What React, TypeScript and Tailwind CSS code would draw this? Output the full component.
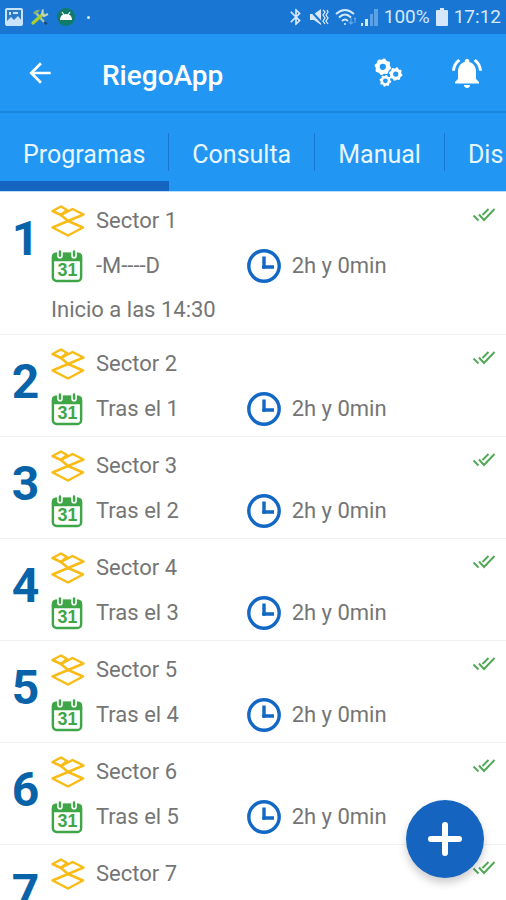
import { MdArrowBack, MdBluetooth, MdNotificationsActive } from "react-icons/md";

type Program = { id: number; name: string; when: string; duration: string; start?: string };

const programs: Program[] = [
  { id: 1, name: "Sector 1", when: "-M----D", duration: "2h y 0min", start: "Inicio a las 14:30" },
  { id: 2, name: "Sector 2", when: "Tras el 1", duration: "2h y 0min" },
  { id: 3, name: "Sector 3", when: "Tras el 2", duration: "2h y 0min" },
  { id: 4, name: "Sector 4", when: "Tras el 3", duration: "2h y 0min" },
  { id: 5, name: "Sector 5", when: "Tras el 4", duration: "2h y 0min" },
  { id: 6, name: "Sector 6", when: "Tras el 5", duration: "2h y 0min" },
  { id: 7, name: "Sector 7", when: "Tras el 6", duration: "2h y 0min" },
];

const tabs = ["Programas", "Consulta", "Manual", "Dis"];

function SectorIcon() {
  return (
    <svg viewBox="0 0 34 32" className="h-8 w-[34px] shrink-0" fill="none" stroke="#f9bb16" strokeWidth="2.5" strokeLinejoin="round" aria-hidden="true">
      <path d="M1.500 6 10 1.500 16 5l-6 5z" />
      <path d="M10 10 21.500 4 32.500 9.500 17 16z" />
      <path d="M17 16 1.500 22.500 17 30.500l15-8z" />
    </svg>
  );
}

function CalendarIcon() {
  return (
    <svg viewBox="0 0 34 36" className="h-[34px] w-8 shrink-0" aria-hidden="true">
      <rect x="2" y="5" width="30" height="29" rx="4" fill="#fff" stroke="#3fa648" strokeWidth="2.600" />
      <path d="M1 13V8q0-4 4-4h24q4 0 4 4v5z" fill="#3fa648" />
      <path d="M9.500 3v4M24.500 3v4" stroke="#fff" strokeWidth="6" strokeLinecap="round" />
      <path d="M9.500 2.500v4.500M24.500 2.500v4.500" stroke="#3fa648" strokeWidth="2.600" strokeLinecap="round" />
      <text x="17.500" y="29" textAnchor="middle" fontFamily="Liberation Sans, sans-serif" fontSize="19" fontWeight="700" fill="#3fa648">31</text>
    </svg>
  );
}

function ClockIcon() {
  return (
    <svg viewBox="0 0 34 34" className="size-[34px] shrink-0" fill="none" stroke="#1268c4" aria-hidden="true">
      <circle cx="17" cy="17" r="15.200" strokeWidth="3.400" />
      <path d="M17 7.500V18h10" strokeWidth="3.400" />
      <circle cx="17" cy="18" r="1.500" fill="#1268c4" />
    </svg>
  );
}

function DoubleCheck() {
  return (
    <svg viewBox="0 0 24 16" className="h-4 w-6 shrink-0" fill="none" stroke="#4fa853" strokeWidth="1.900" role="img" aria-label="Activo">
      <path d="M1.500 8.500 6.500 13.500M7 7.500 12 13 22.500 2M10.500 8 16.500 2" />
    </svg>
  );
}

function Gear({ x, y, r, hole }: { x: number; y: number; r: number; hole: number }) {
  const points = Array.from({ length: 32 }, (_, i) => {
    const radius = i % 4 < 2 ? r : r - 1;
    const angle = ((i + 0.5) * Math.PI) / 16;
    return `${x + radius * Math.cos(angle)},${y + radius * Math.sin(angle)}`;
  }).join(" ");
  return (
    <>
      <polygon points={points} fill="#fff" />
      <circle cx={x} cy={y} r={hole} fill="#2196f3" />
    </>
  );
}

function StatusBar() {
  return (
    <div className="flex h-[34px] shrink-0 items-center justify-between bg-[#1976d2] pr-[5px] pl-[5px] text-[#d5e8fb]">
      <div className="flex items-center gap-2">
        <svg viewBox="0 0 18 18" className="size-[18px]" aria-hidden="true">
          <rect x="1" y="1" width="16" height="16" rx="1" fill="#2b79c9" stroke="#c9e3fc" strokeWidth="2" />
          <path d="M1 14 6 9l3 3 4-4 4 5v4H1zM4 4h2v3H4zM8 4h5v2H8z" fill="#c9e3fc" />
        </svg>
        <svg viewBox="0 0 18 18" className="size-[18px]" fill="none" aria-hidden="true">
          <path d="M5 5 14 15" stroke="#a8c6a0" strokeWidth="2.500" />
          <path d="M2 5q3-4 7-3L5 7z" fill="#8cb07d" />
          <path d="M2 15 12 6" stroke="#a7cf31" strokeWidth="3.200" strokeLinecap="round" />
          <path d="M12 1.500 11 6l2 2 4-2" stroke="#c7d3c2" strokeWidth="2" />
          <path d="m13 14 3 2" stroke="#134b87" strokeWidth="2.500" />
        </svg>
        <svg viewBox="0 0 18 18" className="size-[18px]" aria-hidden="true">
          <circle cx="9" cy="9" r="9" fill="#0f7b68" />
          <path d="M3 12q0-6 6-6t6 6z" fill="#fff" />
          <path d="m5 4 2 3M13 4l-2 3" stroke="#fff" strokeWidth="1.200" />
        </svg>
        <span className="ml-1 size-[3px] rounded-full bg-[#d5e8fb]" />
      </div>
      <div className="flex items-center font-['Roboto',sans-serif] text-[19px] leading-6">
        <MdBluetooth className="h-5 w-5" aria-hidden="true" />
        <svg viewBox="0 0 20 18" className="ml-[3px] h-[18px] w-5" aria-hidden="true">
          <path d="M1 6h4l7-5v16l-7-5H1z" fill="currentColor" />
          <path d="M1 2 14 16" stroke="#1976d2" strokeWidth="2" />
          <path d="m14 2 2 2-2 3 2 3-2 3 2 3M18 2l1 2-2 3 2 3-2 3 2 3" fill="none" stroke="currentColor" strokeWidth="1.300" />
        </svg>
        <svg viewBox="0 0 22 18" className="ml-[6px] h-[18px] w-[22px]" fill="none" stroke="currentColor" strokeWidth="2" aria-hidden="true">
          <path d="M1 6q9-8 18 0M4 9.500q6-6 12 0M7 13q3-3 6 0" />
          <circle cx="10" cy="16" r="1" fill="currentColor" stroke="none" />
          <path d="M16 10v6m-2-2 2 2 2-2M20 15v-5m-1 1 1-1 1 1" stroke="#62a7e8" strokeWidth="1.200" />
        </svg>
        <svg viewBox="0 0 18 18" className="ml-[3px] size-[18px]" fill="currentColor" aria-hidden="true">
          <path d="M1 15h2v3H1zM5 11h3v7H5z" />
          <path d="M10 6h3v12h-3zM14 1h4v17h-4z" fill="#5ba1e6" />
        </svg>
        <span className="ml-[6px]">100%</span>
        <svg viewBox="0 0 12 18" className="ml-[6px] h-[18px] w-3" fill="currentColor" aria-hidden="true">
          <path d="M4 0h4v2h3q1 0 1 1v14q0 1-1 1H1q-1 0-1-1V3q0-1 1-1h3z" />
        </svg>
        <span className="ml-[6px]">17:12</span>
      </div>
    </div>
  );
}

function ProgramRow({ program }: { program: Program }) {
  return (
    <li className="flex border-b border-[#f0f0f0] pt-[6px]">
      <div className="w-[51px] shrink-0 pt-3 text-center text-[48px] leading-[58px] font-bold text-[#0863a8]">{program.id}</div>
      <div className="min-w-0 grow">
        <div className="flex h-[45px] items-center gap-[11px] pr-[10px]">
          <SectorIcon />
          <span className="grow">{program.name}</span>
          <span className="self-start pt-[9px]">
            <DoubleCheck />
          </span>
        </div>
        <div className="grid h-[45px] grid-cols-[43%_1fr]">
          <div className="flex items-center gap-[13px]">
            <CalendarIcon />
            <span>{program.when}</span>
          </div>
          <div className="flex items-center gap-[11px]">
            <ClockIcon />
            <span>{program.duration}</span>
          </div>
        </div>
        {program.start ? <p className="h-[46px] pt-2">{program.start}</p> : <div className="h-[5px]" />}
      </div>
    </li>
  );
}

export default function App() {
  return (
    <div className="flex h-screen flex-col overflow-hidden bg-white font-['Roboto',sans-serif] text-[22px] leading-7 text-[#757575]">
      <StatusBar />
      <header className="flex h-[79px] shrink-0 items-center border-b-2 border-[#1a83dc] bg-[#2196f3] pr-[21px] pl-6 text-white">
        <button aria-label="Volver" className="flex size-8 items-center justify-center">
          <MdArrowBack className="size-8" />
        </button>
        <h1 className="ml-[46px] grow pt-[6px] text-[28px] leading-8 font-medium">RiegoApp</h1>
        <button aria-label="Ajustes" className="size-[29px]">
          <svg viewBox="0 0 28 28" className="size-[29px]" aria-hidden="true">
            <Gear x={8.500} y={8.500} r={8} hole={3} />
            <Gear x={21} y={15.500} r={6.500} hole={2.500} />
            <Gear x={11} y={22} r={5.700} hole={2.300} />
          </svg>
        </button>
        <button aria-label="Avisos" className="ml-[46px] flex size-9 items-center justify-center">
          <MdNotificationsActive className="size-9" />
        </button>
      </header>
      <nav role="tablist" className="flex h-[78px] shrink-0 overflow-hidden bg-[#2196f3] text-[25px] text-[#e8f6ff]">
        {tabs.map((tab, i) => (
          <button
            key={tab}
            role="tab"
            aria-selected={i === 0}
            className={`relative shrink-0 border-b-[10px] pt-4 pr-6 pl-[23px] ${i === 0 ? "border-[#1565c0]" : "border-transparent"}`}
          >
            {tab}
            {i < tabs.length - 1 && <span className="absolute top-5 right-0 h-[38px] w-px bg-[#1976d2]" />}
          </button>
        ))}
      </nav>
      <main className="min-h-0 grow overflow-y-auto border-t border-[#bbdefb] [scrollbar-width:none]">
        <ul>
          {programs.map((program) => (
            <ProgramRow key={program.id} program={program} />
          ))}
        </ul>
      </main>
      <button aria-label="Añadir programa" className="fixed right-[22px] bottom-[22px] flex size-[78px] items-center justify-center rounded-full bg-[#1565c0] shadow-[0_5px_9px_rgba(0,0,0,0.2)]">
        <svg viewBox="0 0 36 36" className="size-9" stroke="#fff" strokeWidth="6" strokeLinecap="round" aria-hidden="true">
          <path d="M18 4v28M4 18h28" />
        </svg>
      </button>
    </div>
  );
}
